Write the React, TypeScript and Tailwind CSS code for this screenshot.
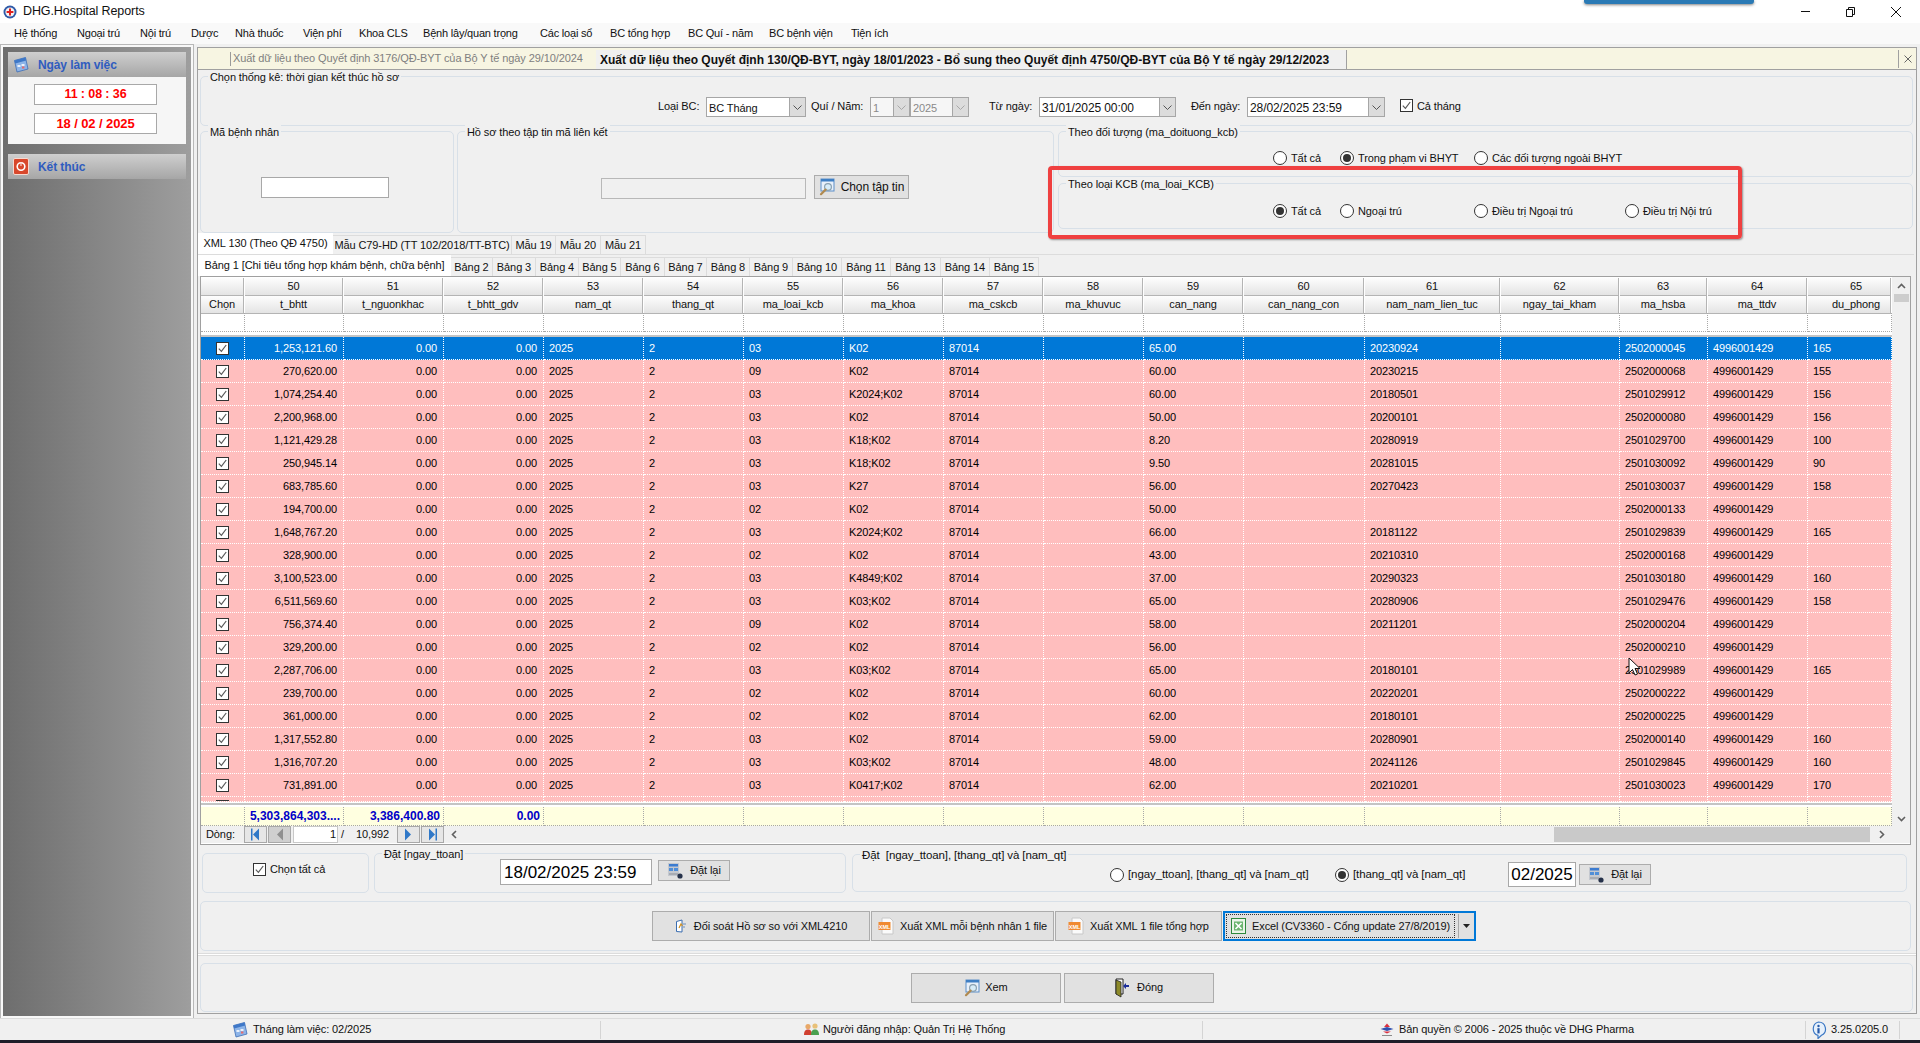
import type { ReactNode } from "react"

const menuItems = [
  ["Hệ thống", "w-[63px]"],
  ["Ngoại trú", "w-[63px]"],
  ["Nội trú", "w-[51px]"],
  ["Dược", "w-[44px]"],
  ["Nhà thuốc", "w-[68px]"],
  ["Viện phí", "w-[56px]"],
  ["Khoa CLS", "w-[64px]"],
  ["Bệnh lây/quan trọng", "w-[117px]"],
  ["Các loại sổ", "w-[70px]"],
  ["BC tổng hợp", "w-[78px]"],
  ["BC Quí - năm", "w-[81px]"],
  ["BC bệnh viện", "w-[82px]"],
  ["Tiện ích", "w-[50px]"],
]

const gridCols = "grid grid-cols-[44px_99px_100px_100px_100px_100px_100px_100px_100px_100px_100px_121px_136px_119px_88px_100px_84px]"

const colNums = ["", "50", "51", "52", "53", "54", "55", "56", "57", "58", "59", "60", "61", "62", "63", "64", "65"]
const colNames = ["Chọn", "t_bhtt", "t_nguonkhac", "t_bhtt_gdv", "nam_qt", "thang_qt", "ma_loai_kcb", "ma_khoa", "ma_cskcb", "ma_khuvuc", "can_nang", "can_nang_con", "nam_nam_lien_tuc", "ngay_tai_kham", "ma_hsba", "ma_ttdv", "du_phong"]

// t_bhtt, ma_loai_kcb, ma_khoa, can_nang, nam_nam_lien_tuc, ma_hsba, du_phong
const rows = [
  ["1,253,121.60", "03", "K02", "65.00", "20230924", "2502000045", "165"],
  ["270,620.00", "09", "K02", "60.00", "20230215", "2502000068", "155"],
  ["1,074,254.40", "03", "K2024;K02", "60.00", "20180501", "2501029912", "156"],
  ["2,200,968.00", "03", "K02", "50.00", "20200101", "2502000080", "156"],
  ["1,121,429.28", "03", "K18;K02", "8.20", "20280919", "2501029700", "100"],
  ["250,945.14", "03", "K18;K02", "9.50", "20281015", "2501030092", "90"],
  ["683,785.60", "03", "K27", "56.00", "20270423", "2501030037", "158"],
  ["194,700.00", "02", "K02", "50.00", "", "2502000133", ""],
  ["1,648,767.20", "03", "K2024;K02", "66.00", "20181122", "2501029839", "165"],
  ["328,900.00", "02", "K02", "43.00", "20210310", "2502000168", ""],
  ["3,100,523.00", "03", "K4849;K02", "37.00", "20290323", "2501030180", "160"],
  ["6,511,569.60", "03", "K03;K02", "65.00", "20280906", "2501029476", "158"],
  ["756,374.40", "09", "K02", "58.00", "20211201", "2502000204", ""],
  ["329,200.00", "02", "K02", "56.00", "", "2502000210", ""],
  ["2,287,706.00", "03", "K03;K02", "65.00", "20180101", "2501029989", "165"],
  ["239,700.00", "02", "K02", "60.00", "20220201", "2502000222", ""],
  ["361,000.00", "02", "K02", "62.00", "20180101", "2502000225", ""],
  ["1,317,552.80", "03", "K02", "59.00", "20280901", "2502000140", "160"],
  ["1,316,707.20", "03", "K03;K02", "48.00", "20241126", "2501029845", "160"],
  ["731,891.00", "03", "K0417;K02", "62.00", "20210201", "2501030023", "170"],
]

const tabs1 = [
  ["Mẫu C79-HD (TT 102/2018/TT-BTC)", "w-[179px]"],
  ["Mẫu 19", "w-[44px]"],
  ["Mẫu 20", "w-[45px]"],
  ["Mẫu 21", "w-[45px]"],
]
const tabs2 = [
  ["Bảng 2", "w-[42px]"],
  ["Bảng 3", "w-[43px]"],
  ["Bảng 4", "w-[43px]"],
  ["Bảng 5", "w-[42px]"],
  ["Bảng 6", "w-[44px]"],
  ["Bảng 7", "w-[42px]"],
  ["Bảng 8", "w-[43px]"],
  ["Bảng 9", "w-[43px]"],
  ["Bảng 10", "w-[49px]"],
  ["Bảng 11", "w-[49px]"],
  ["Bảng 13", "w-[50px]"],
  ["Bảng 14", "w-[49px]"],
  ["Bảng 15", "w-[49px]"],
]

function AppIcon() {
  return (
    <svg width="14" height="14" viewBox="0 0 14 14">
      <circle cx="7" cy="7" r="6.5" fill="#2f5aa8" />
      <circle cx="7" cy="7" r="4.6" fill="#f4f4f4" />
      <path d="M6 3.6h2v2.4h2.4v2H8v2.4H6V8H3.6V6H6z" fill="#e02020" />
    </svg>
  )
}

function CalendarIcon() {
  return (
    <svg width="16" height="17" viewBox="0 0 16 17">
      <path d="M1.5 4.5 12.5 1.5 15 13 4 16z" fill="#8db4e8" stroke="#3e6db5" strokeWidth="0.8" />
      <path d="M1.5 4.5 12.5 1.5 13.2 4.6 2.2 7.6z" fill="#3e78c8" />
      <path d="M4.5 9h3v2h-3zM8.5 8h3v2h-3z" fill="#e9f1fb" />
      <path d="M9 10.5h2.4v2H9z" fill="#e86a6a" />
    </svg>
  )
}

function PowerIcon() {
  return (
    <svg width="16" height="17" viewBox="0 0 16 17">
      <rect x="0.5" y="0.5" width="15" height="16" rx="1.5" fill="#d8472b" stroke="#f6d8d0" />
      <circle cx="8" cy="8.5" r="3.8" fill="none" stroke="#fff" strokeWidth="1.6" />
      <path d="M8 4v4" stroke="#f8d0c8" strokeWidth="1.2" />
    </svg>
  )
}

function SearchDocIcon() {
  return (
    <svg width="16" height="18" viewBox="0 0 16 18">
      <rect x="2" y="1" width="13" height="12" fill="#e8f0fa" stroke="#5d8fc9" />
      <path d="M2 1h13v2.5H2z" fill="#3f7fc4" />
      <circle cx="9" cy="9" r="3.4" fill="#d7ecf8" stroke="#8aa0b0" strokeWidth="1.2" />
      <path d="M6.6 11.6 2 16.2" stroke="#b08a50" strokeWidth="2.2" strokeLinecap="round" />
    </svg>
  )
}

function TableIcon() {
  return (
    <svg width="17" height="18" viewBox="0 0 17 18">
      <rect x="1" y="1" width="11" height="13" fill="#c4c8cf" />
      <path d="M2 2h9v2.5H2z" fill="#3c7cd0" />
      <path d="M2 6h4v3H2zM7 6h4v3H7z" fill="#4f8ed8" />
      <path d="M2 11h9v2H2z" fill="#a8acb3" />
      <circle cx="13" cy="14" r="2.6" fill="#26324a" />
    </svg>
  )
}

function ReconcileIcon() {
  return (
    <svg width="13" height="14" viewBox="0 0 13 14">
      <path d="M1.5 2.5 7 1v12l-5.5-.5z" fill="#fff" stroke="#3a6db0" />
      <path d="M8 5h3M8 8h2" stroke="#6a8fc0" />
      <path d="M4 9 6 5l1.5 2" fill="none" stroke="#d09020" strokeWidth="1.2" />
    </svg>
  )
}

function XmlIcon() {
  return (
    <svg width="16" height="18" viewBox="0 0 16 18">
      <path d="M4 1h8l3 3v13H4z" fill="#fafafa" stroke="#c8c8c8" />
      <rect x="0.5" y="5" width="12" height="8" fill="#f08a30" />
      <text x="6.5" y="11.5" textAnchor="middle" fontSize="5.5" fontWeight="700" fill="#fff" fontFamily="Liberation Sans, sans-serif">XML</text>
    </svg>
  )
}

function ExcelIcon() {
  return (
    <svg width="15" height="16" viewBox="0 0 15 16">
      <rect x="0.5" y="0.5" width="14" height="15" fill="#eaf4e8" stroke="#2f8a3e" />
      <path d="M3 3.5h9v9H3z" fill="#6bb56f" />
      <path d="M4.5 5 10.5 11M10.5 5 4.5 11" stroke="#fff" strokeWidth="1.6" />
    </svg>
  )
}

function DoorIcon() {
  return (
    <svg width="14" height="20" viewBox="0 0 14 20">
      <path d="M1 1h7v15H1z" fill="#fff" stroke="#222" />
      <path d="M1 2l5 2v15l-5-3z" fill="#8d8a2a" stroke="#222" strokeWidth="0.8" />
      <path d="M14 7H11V5L8 8l3 3V9h3z" fill="#1d2f9a" />
    </svg>
  )
}

function UsersIcon() {
  return (
    <svg width="15" height="15" viewBox="0 0 15 15">
      <circle cx="4" cy="4.5" r="2.6" fill="#e8a868" />
      <path d="M0 13c0-4 1.5-5.5 4-5.5S8 9 8 13z" fill="#d04030" />
      <circle cx="11" cy="4" r="2.6" fill="#e8c078" />
      <path d="M7 13c0-4 1.5-5.5 4-5.5S15 9 15 13z" fill="#4aa050" />
    </svg>
  )
}

function LogoIcon() {
  return (
    <svg width="14" height="14" viewBox="0 0 14 14">
      <path d="M7 0.5 10 4H4z" fill="#d83040" />
      <path d="M0.5 6 7 4l6.5 2L7 8z" fill="#3050b0" />
      <path d="M3 8.5h8L7 10.5z" fill="#d83040" />
      <path d="M2 12.5h10" stroke="#8a8a8a" />
    </svg>
  )
}

function InfoIcon() {
  return (
    <svg width="17" height="18" viewBox="0 0 17 18">
      <path d="M8.5 1a7 7 0 0 1 3 13.3L8 17.5v-3.1A7 7 0 0 1 8.5 1z" fill="#e6f0fb" stroke="#3c78c4" strokeWidth="1.2" />
      <path d="M7.4 7.2h2.2v5.2H7.4z" fill="#2458a8" />
      <circle cx="8.5" cy="5" r="1.2" fill="#2458a8" />
    </svg>
  )
}

function Check({ className = "" }: { className?: string }) {
  return (
    <span className={`flex h-[13px] w-[13px] shrink-0 items-center justify-center border border-[#333] bg-white ${className}`}>
      <svg width="9" height="9" viewBox="0 0 9 9">
        <path d="M0.8 4.6 3.4 7.4 8.2 1" fill="none" stroke="#5a5a5a" strokeWidth="1.2" />
      </svg>
    </span>
  )
}

function Radio({ on = false, label, className = "" }: { on?: boolean; label: string; className?: string }) {
  return (
    <div className={`flex items-center gap-[4px] ${className}`}>
      <span className="flex h-[14px] w-[14px] shrink-0 items-center justify-center rounded-full border border-[#333] bg-white">
        {on && <span className="h-[8px] w-[8px] rounded-full bg-[#333]" />}
      </span>
      <span className="whitespace-nowrap">{label}</span>
    </div>
  )
}

function Group({ title, className = "", children }: { title?: string; className?: string; children?: ReactNode }) {
  return (
    <div className={`relative rounded-[5px] border border-[#d8e0e8] ${className}`}>
      {title && <span className="absolute -top-[7px] left-[7px] whitespace-pre bg-[#f0f0f0] px-[2px] leading-[14px]">{title}</span>}
      {children}
    </div>
  )
}

function Combo({ value, className = "", disabled = false, date = false }: { value: string; className?: string; disabled?: boolean; date?: boolean }) {
  return (
    <div className={`flex h-[20px] items-stretch border border-[#a6a6a6] ${disabled ? "bg-[#f6f6f6] text-[#8a8a8a]" : "bg-white"} ${className}`}>
      <span className={`flex-1 overflow-hidden whitespace-nowrap pl-[2px] leading-[20px] ${date ? "text-[12px]" : ""}`}>{value}</span>
      <span className="flex w-[16px] items-center justify-center border-l border-[#a6a6a6] bg-[#dcdcdc]">
        <svg width="9" height="5" viewBox="0 0 9 5">
          <path d="M0.5 0.5 4.5 4.5 8.5 0.5" fill="none" stroke={disabled ? "#a8a8a8" : "#555"} />
        </svg>
      </span>
    </div>
  )
}

function Btn({ icon, label, className = "", gap = "gap-[6px]" }: { icon: ReactNode; label: string; className?: string; gap?: string }) {
  return (
    <div className={`flex items-center justify-center whitespace-nowrap border border-[#acacac] bg-[#e1e1e1] ${gap} ${className}`}>
      {icon}
      <span>{label}</span>
    </div>
  )
}

function NavBtn({ dir, bar = false, off = false }: { dir: "l" | "r"; bar?: boolean; off?: boolean }) {
  const fill = off ? "#8f8f8f" : "#2f78c8"
  return (
    <span className={`mr-[1px] flex h-[17px] w-[23px] items-center justify-center border border-[#a8a8a8] ${off ? "bg-[#cfcfcf]" : "bg-[#e6e6e6]"}`}>
      <svg width="11" height="13" viewBox="0 0 11 13">
        {dir === "l" ? <path d="M9 0.5v12L3 6.5z" fill={fill} /> : <path d="M2 0.5v12l6-6z" fill={fill} />}
        {bar && (dir === "l" ? <path d="M1 0.5h1.5v12H1z" fill={fill} /> : <path d="M8.5 0.5H10v12H8.5z" fill={fill} />)}
      </svg>
    </span>
  )
}

function HeaderCell({ children, last = false }: { children?: ReactNode; last?: boolean }) {
  return (
    <div className={`mr-[1px] flex items-center justify-center whitespace-nowrap border-b border-r border-[#b4b4b4] bg-gradient-to-b from-[#fdfdfd] to-[#e4e4e4] ${last ? "pl-[14px]" : ""}`}>
      {children}
    </div>
  )
}

function DataRow({ row, selected = false, partial = false }: { row: string[]; selected?: boolean; partial?: boolean }) {
  const cell = `flex items-center overflow-hidden whitespace-nowrap border-r border-b border-dotted border-white ${selected ? "bg-[#0078d7] text-white" : "bg-[#ffbebe] text-black"}`
  const num = `${cell} justify-end pr-[6px]`
  const txt = `${cell} pl-[5px]`
  const left = partial ? "" : "text"
  return (
    <div className={`${gridCols} ${partial ? "h-[5px] items-stretch overflow-hidden" : "h-[23px]"}`}>
      <div className={`${cell} justify-center ${partial ? "items-start pt-[3px]" : ""}`}>
        <Check />
      </div>
      <div className={num}>{row[0]}</div>
      <div className={num}>{left && "0.00"}</div>
      <div className={num}>{left && "0.00"}</div>
      <div className={txt}>{left && "2025"}</div>
      <div className={txt}>{left && "2"}</div>
      <div className={txt}>{row[1]}</div>
      <div className={txt}>{row[2]}</div>
      <div className={txt}>{left && "87014"}</div>
      <div className={txt} />
      <div className={txt}>{row[3]}</div>
      <div className={txt} />
      <div className={txt}>{row[4]}</div>
      <div className={txt} />
      <div className={txt}>{row[5]}</div>
      <div className={txt}>{left && "4996001429"}</div>
      <div className={txt}>{row[6]}</div>
    </div>
  )
}

function DataGrid() {
  return (
    <div className="ml-[2px] h-[569px] w-[1711px] border-x border-b border-t border-[#a0a0a0] bg-white">
      <div className="flex h-[549px]">
        <div className="w-[1691px] shrink-0">
          <div className={`${gridCols} mt-[1px] h-[18px]`}>
            {colNums.map((n, i) => (
              <HeaderCell key={i} last={i === 16}>{n}</HeaderCell>
            ))}
          </div>
          <div className={`${gridCols} h-[17px]`}>
            {colNames.map((n, i) => (
              <HeaderCell key={i} last={i === 16}>{n}</HeaderCell>
            ))}
          </div>
          <div className={`${gridCols} h-[19px] bg-white`}>
            {colNames.map((n, i) => (
              <div key={i} className="border-r border-b border-dotted border-[#a8a8a8]" />
            ))}
          </div>
          <div className="mt-[3px] h-[2px] bg-[#c4c4c4]" />
          {rows.map((r, i) => (
            <DataRow key={i} row={r} selected={i === 0} />
          ))}
          <DataRow row={["", "", "", "", "", "", ""]} partial />
          <div className="mt-[1px] h-[2px] bg-[#c4c4c4]" />
          <div className={`${gridCols} mt-[2px] h-[19px] bg-[#ffffe0] text-[12px] font-bold tracking-normal text-[#0000c8]`}>
            {colNames.map((n, i) => (
              <div key={i} className="flex items-center justify-end overflow-hidden whitespace-nowrap border-r border-b border-dotted border-[#a8a8a8] pr-[3px]">
                {i === 1 && "5,303,864,303...."}
                {i === 2 && "3,386,400.80"}
                {i === 3 && "0.00"}
              </div>
            ))}
          </div>
        </div>
        <div className="flex flex-1 flex-col items-center bg-[#f0f0f0]">
          <svg className="mt-[6px]" width="9" height="6" viewBox="0 0 9 6">
            <path d="M1 5 4.5 1.5 8 5" fill="none" stroke="#606060" strokeWidth="1.6" />
          </svg>
          <div className="mt-[5px] h-[8px] w-[15px] bg-[#cdcdcd]" />
          <div className="flex-1" />
          <svg className="mb-[4px]" width="9" height="6" viewBox="0 0 9 6">
            <path d="M1 1 4.5 4.5 8 1" fill="none" stroke="#606060" strokeWidth="1.6" />
          </svg>
        </div>
      </div>
      <div className="flex h-[17px] items-center bg-[#f0f0f0] pl-[5px]">
        <span className="w-[38px]">Dòng:</span>
        <NavBtn dir="l" bar />
        <NavBtn dir="l" off />
        <span className="ml-[1px] h-[17px] w-[45px] border border-[#c8c8c8] bg-white pr-[1px] text-right leading-[15px]">1</span>
        <span className="ml-[3px] w-[15px]">/</span>
        <span className="w-[41px]">10,992</span>
        <NavBtn dir="r" />
        <NavBtn dir="r" bar />
        <svg className="ml-[6px]" width="6" height="9" viewBox="0 0 6 9">
          <path d="M5 1 1.5 4.5 5 8" fill="none" stroke="#606060" strokeWidth="1.6" />
        </svg>
        <div className="ml-[1097px] h-[15px] w-[316px] bg-[#c9c9c9]" />
        <svg className="ml-[9px]" width="6" height="9" viewBox="0 0 6 9">
          <path d="M1 1 4.5 4.5 1 8" fill="none" stroke="#606060" strokeWidth="1.6" />
        </svg>
      </div>
    </div>
  )
}

function Tab({ label, className = "" }: { label: string; className?: string }) {
  return <div className={`flex h-[19px] items-center justify-center whitespace-nowrap border-r border-t border-[#dcdcdc] bg-[#f0f0f0] ${className}`}>{label}</div>
}

function Sidebar() {
  return (
    <div className="ml-[1px] mt-[1px] h-[973px] w-[192px] shrink-0 border-2 border-[#f8f8f8] bg-gradient-to-r from-[#6e6e6e] to-[#9e9e9e] px-[5px] pt-[5px] shadow-[0_0_0_1px_#b8b8b8]">
      <div className="flex h-[25px] items-center gap-[9px] bg-gradient-to-b from-[#cfcfcf] to-[#a6a6a6] pl-[5px] text-[12px] font-bold text-[#2f5cbf]">
        <CalendarIcon />
        Ngày làm việc
      </div>
      <div className="flex h-[67px] flex-col items-start gap-[8px] bg-[#f6f6f6] pl-[26px] pt-[7px] font-bold text-[#ff0000]">
        <div className="flex h-[21px] w-[123px] items-center justify-center border border-[#a8a8a8] bg-white text-[12.5px]">11 : 08 : 36</div>
        <div className="flex h-[21px] w-[123px] items-center justify-center border border-[#a8a8a8] bg-white text-[13px]">18 / 02 / 2025</div>
      </div>
      <div className="mt-[10px] flex h-[25px] items-center gap-[9px] bg-gradient-to-b from-[#cfcfcf] to-[#a6a6a6] pl-[5px] text-[12px] font-bold text-[#2f5cbf]">
        <PowerIcon />
        Kết thúc
      </div>
    </div>
  )
}

export default function App() {
  return (
    <div className="relative flex h-[1043px] w-[1920px] flex-col overflow-hidden bg-[#f0f0f0] font-['Liberation_Sans',sans-serif] text-[11px] tracking-[-0.1px] text-[#111]">
      {/* title bar */}
      <div className="flex h-[23px] shrink-0 items-center bg-white pl-[3px] text-[12.5px]">
        <AppIcon />
        <span className="ml-[6px]">DHG.Hospital Reports</span>
        <div className="ml-auto flex pr-[2px]">
          <span className="flex w-[45px] justify-center">
            <svg width="11" height="11" viewBox="0 0 11 11"><path d="M1 5.5h9" stroke="#111" /></svg>
          </span>
          <span className="flex w-[45px] justify-center">
            <svg width="11" height="11" viewBox="0 0 11 11"><path d="M1.5 3.5h6v7h-6zM3.5 3.5v-2h6v7h-2" fill="none" stroke="#111" /></svg>
          </span>
          <span className="flex w-[45px] justify-center">
            <svg width="12" height="12" viewBox="0 0 12 12"><path d="M1 1l10 10M11 1 1 11" stroke="#111" /></svg>
          </span>
        </div>
      </div>

      {/* menu */}
      <div className="flex h-[21px] shrink-0 items-center bg-[#f9f9f9] pl-[14px] tracking-[-0.2px]">
        {menuItems.map(([label, w]) => (
          <span key={label} className={`whitespace-nowrap ${w}`}>{label}</span>
        ))}
      </div>

      <div className="flex h-[974px] shrink-0">
        <Sidebar />

        {/* main panel */}
        <div className="ml-[4px] mt-[3px] h-[967px] w-[1720px] border border-[#a0a0a0] bg-[#f0f0f0]">
          <div className="flex h-[22px] items-end border-b border-[#a0a0a0] bg-[#f7f5e2] pl-[32px]">
            <span className="mb-[3px] h-[14px] border-l border-[#9a9a9a]" />
            <span className="mb-[3px] ml-[2px] w-[363px] whitespace-nowrap text-[#808080]">Xuất dữ liệu theo Quyết định 3176/QĐ-BYT của Bộ Y tế ngày 29/10/2024</span>
            <span className="flex h-[19px] w-[751px] items-center whitespace-nowrap border-r border-[#a0a0a0] bg-[#f0f0f0] pl-[4px] text-[12px] font-bold tracking-normal">
              Xuất dữ liệu theo Quyết định 130/QĐ-BYT, ngày 18/01/2023 - Bổ sung theo Quyết định 4750/QĐ-BYT của Bộ Y tế ngày 29/12/2023
            </span>
            <span className="mb-[1px] ml-auto flex h-[18px] w-[18px] items-center justify-center border-l border-[#a0a0a0] pl-[1px]">
              <svg width="8" height="8" viewBox="0 0 8 8"><path d="M0.5 0.5l7 7M7.5 0.5l-7 7" stroke="#666" /></svg>
            </span>
          </div>

          <Group title="Chọn thống kê: thời gian kết thúc hồ sơ" className="ml-[2px] mt-[6px] flex h-[50px] w-[1713px] items-start pt-[20px]">
            <span className="ml-[457px] w-[48px] leading-[18px]">Loại BC:</span>
            <Combo value="BC Tháng" className="w-[100px]" />
            <span className="ml-[5px] w-[59px] leading-[18px]">Quí / Năm:</span>
            <Combo value="1" disabled className="w-[40px]" />
            <Combo value="2025" disabled className="w-[59px]" />
            <span className="ml-[20px] w-[50px] leading-[18px]">Từ ngày:</span>
            <Combo value="31/01/2025 00:00" date className="w-[137px]" />
            <span className="ml-[15px] w-[56px] leading-[18px]">Đến ngày:</span>
            <Combo value="28/02/2025 23:59" date className="w-[138px]" />
            <Check className="ml-[15px] mt-[2px]" />
            <span className="ml-[4px] leading-[18px]">Cả tháng</span>
          </Group>

          <div className="ml-[2px] mt-[5px] flex h-[102px]">
            <Group title="Mã bệnh nhân" className="w-[254px] pl-[60px] pt-[45px]">
              <div className="h-[21px] w-[128px] border border-[#a8a8a8] bg-white" />
            </Group>
            <Group title="Hồ sơ theo tập tin mã liên kết" className="ml-[3px] flex w-[597px] items-end pb-[33px] pl-[143px]">
              <div className="h-[21px] w-[205px] border border-[#b8b8b8] bg-[#f0f0f0]" />
              <Btn icon={<SearchDocIcon />} label="Chọn tập tin" className="ml-[8px] h-[24px] w-[95px] text-[12px]" />
            </Group>
            <div className="ml-[4px] flex w-[855px] flex-col gap-[6px]">
              <Group title="Theo đối tượng (ma_doituong_kcb)" className="flex h-[46px] items-start pl-[214px] pt-[18px]">
                <Radio label="Tất cả" className="w-[67px]" />
                <Radio on label="Trong phạm vi BHYT" className="w-[134px]" />
                <Radio label="Các đối tượng ngoài BHYT" />
              </Group>
              <Group title="Theo loại KCB (ma_loai_KCB)" className="flex h-[46px] items-start pl-[214px] pt-[19px]">
                <Radio on label="Tất cả" className="w-[67px]" />
                <Radio label="Ngoại trú" className="w-[134px]" />
                <Radio label="Điều trị Ngoại trú" className="w-[151px]" />
                <Radio label="Điều trị Nội trú" />
              </Group>
            </div>
          </div>

          {/* result tabs */}
          <div className="mt-[1px] flex h-[21px] w-[1716px] items-end border-b border-[#dcdcdc]">
            <div className="flex h-[21px] w-[135px] items-center justify-center whitespace-nowrap bg-white">XML 130 (Theo QĐ 4750)</div>
            {tabs1.map(([label, w]) => (
              <Tab key={label} label={label} className={w} />
            ))}
          </div>
          <div className="flex h-[21px] w-[1716px] items-end">
            <div className="flex h-[21px] w-[253px] items-center justify-center whitespace-nowrap bg-white">Bảng 1 [Chi tiêu tổng hợp khám bệnh, chữa bệnh]</div>
            {tabs2.map(([label, w]) => (
              <Tab key={label} label={label} className={w} />
            ))}
          </div>

          <DataGrid />

          {/* set date groups */}
          <div className="ml-[4px] mt-[8px] flex h-[40px]">
            <Group className="flex w-[167px] items-start pl-[50px] pt-[9px]">
              <Check />
              <span className="ml-[4px] leading-[13px]">Chọn tất cả</span>
            </Group>
            <Group title="Đặt [ngay_ttoan]" className="ml-[5px] flex w-[472px] items-start pl-[125px] pt-[5px]">
              <div className="h-[26px] w-[152px] border border-[#a8a8a8] bg-white pl-[3px] text-[17px] leading-[25px] tracking-normal text-black">18/02/2025 23:59</div>
              <Btn icon={<TableIcon />} label="Đặt lại" className="ml-[6px] mt-[1px] h-[21px] w-[72px]" />
            </Group>
            <Group title={"Đặt  [ngay_ttoan], [thang_qt] và [nam_qt]"} className="ml-[6px] mt-[1px] flex h-[38px] w-[1055px] items-center pl-[257px] pt-[3px] text-[11.5px]">
              <Radio label="[ngay_ttoan], [thang_qt] và [nam_qt]" className="w-[225px]" />
              <Radio on label="[thang_qt] và [nam_qt]" className="w-[173px]" />
              <div className="h-[25px] w-[68px] border border-[#a8a8a8] bg-white text-center text-[17px] leading-[24px] tracking-normal text-black">02/2025</div>
              <Btn icon={<TableIcon />} label="Đặt lại" className="ml-[3px] h-[21px] w-[72px] text-[11px]" />
            </Group>
          </div>

          {/* export buttons */}
          <Group className="ml-[2px] mt-[8px] flex h-[50px] w-[1711px] items-center pl-[451px]">
            <Btn icon={<ReconcileIcon />} label="Đối soát Hồ sơ so với XML4210" className="h-[30px] w-[218px]" />
            <Btn icon={<XmlIcon />} label="Xuất XML mỗi bệnh nhân 1 file" className="ml-[1px] h-[30px] w-[183px]" />
            <Btn icon={<XmlIcon />} label="Xuất XML 1 file tổng hợp" className="ml-[1px] h-[30px] w-[167px]" />
            <div className="ml-[1px] flex h-[30px] w-[253px] border-2 border-[#0078d7] bg-[#e1e1e1] p-[1px]">
              <div className="flex flex-1 items-center justify-center gap-[6px] whitespace-nowrap border border-dotted border-[#333]">
                <ExcelIcon />
                Excel (CV3360 - Cổng update 27/8/2019)
              </div>
              <div className="ml-[3px] flex w-[15px] items-center justify-center border-l border-[#a8a8a8]">
                <svg width="7" height="4" viewBox="0 0 7 4"><path d="M0 0h7L3.5 4z" fill="#222" /></svg>
              </div>
            </div>
          </Group>

          <div className="mt-[2px] h-[3px] border-y border-[#dcdcdc] bg-white" />

          <Group className="ml-[2px] mt-[7px] flex h-[49px] w-[1713px] items-center pl-[710px]">
            <Btn icon={<SearchDocIcon />} label="Xem" gap="gap-[5px]" className="h-[30px] w-[150px]" />
            <Btn icon={<DoorIcon />} label="Đóng" gap="gap-[8px]" className="ml-[3px] h-[30px] w-[150px]" />
          </Group>
        </div>
      </div>

      {/* status bar */}
      <div className="flex h-[22px] shrink-0 items-center border-t border-[#dcdcdc] bg-[#f0f0f0]">
        <div className="flex h-[18px] w-[601px] items-center gap-[5px] border-r border-[#d4d4d4] pl-[232px]">
          <CalendarIcon />
          Tháng làm việc: 02/2025
        </div>
        <div className="flex h-[18px] w-[602px] items-center gap-[4px] border-r border-[#d4d4d4] pl-[203px]">
          <UsersIcon />
          Người đăng nhập: Quản Trị Hệ Thống
        </div>
        <div className="flex h-[18px] w-[603px] items-center gap-[5px] border-r border-[#d4d4d4] pl-[177px]">
          <LogoIcon />
          Bản quyền © 2006 - 2025 thuộc về DHG Pharma
        </div>
        <div className="flex h-[18px] w-[94px] items-center gap-[4px] border-r border-[#d4d4d4] pl-[4px]">
          <InfoIcon />
          3.25.0205.0
        </div>
      </div>
      <div className="h-[3px] shrink-0 bg-[#1e1c28]" />

      {/* annotation overlay */}
      <div className="absolute left-[1048px] top-[166px] h-[73px] w-[694px] rounded-[4px] border-[4px] border-[#ef4040] shadow-[1px_1px_2px_rgba(0,0,0,0.4)]" />
      <div className="absolute left-[1584px] top-0 h-[4px] w-[170px] rounded-b-[3px] bg-[#2a7ab5] shadow-[0_1px_3px_rgba(0,0,0,0.5)]" />
      <svg className="absolute left-[1628px] top-[657px]" width="13" height="20" viewBox="0 0 13 20">
        <path d="M1 1v15l3.5-3.5L7 18l2.5-1-2.5-5.5h5z" fill="#fff" stroke="#111" />
      </svg>
    </div>
  )
}
